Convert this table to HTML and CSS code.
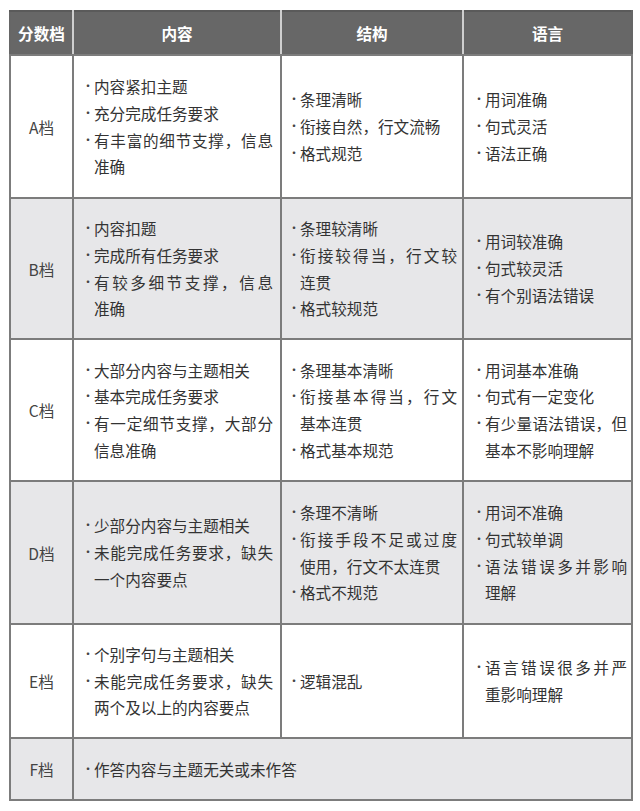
FILE: index.html
```html
<!DOCTYPE html>
<html lang="zh">
<head>
<meta charset="utf-8">
<title>评分标准</title>
<link rel="stylesheet" href="styles.css">
</head>
<body>
<table class="rubric">
  <colgroup>
    <col class="w-level">
    <col class="w-content">
    <col class="w-struct">
    <col class="w-lang">
  </colgroup>
  <thead>
    <tr>
      <th>分数档</th>
      <th>内容</th>
      <th>结构</th>
      <th>语言</th>
    </tr>
  </thead>
  <tbody>
    <tr class="r-a">
      <td class="level">A档</td>
      <td class="c-content"><ul class="pts">
        <li>内容紧扣主题</li>
        <li>充分完成任务要求</li>
        <li><span class="jl">有丰富的细节支撑，信息</span><span>准确</span></li>
      </ul></td>
      <td class="c-struct"><ul class="pts">
        <li>条理清晰</li>
        <li>衔接自然，行文流畅</li>
        <li>格式规范</li>
      </ul></td>
      <td class="c-lang"><ul class="pts">
        <li>用词准确</li>
        <li>句式灵活</li>
        <li>语法正确</li>
      </ul></td>
    </tr>
    <tr class="r-b">
      <td class="level">B档</td>
      <td class="c-content"><ul class="pts">
        <li>内容扣题</li>
        <li>完成所有任务要求</li>
        <li><span class="jl">有较多细节支撑，信息</span><span>准确</span></li>
      </ul></td>
      <td class="c-struct"><ul class="pts">
        <li>条理较清晰</li>
        <li><span class="jl">衔接较得当，行文较</span><span>连贯</span></li>
        <li>格式较规范</li>
      </ul></td>
      <td class="c-lang"><ul class="pts">
        <li>用词较准确</li>
        <li>句式较灵活</li>
        <li>有个别语法错误</li>
      </ul></td>
    </tr>
    <tr class="r-c">
      <td class="level">C档</td>
      <td class="c-content"><ul class="pts">
        <li>大部分内容与主题相关</li>
        <li>基本完成任务要求</li>
        <li><span class="jl">有一定细节支撑，大部分</span><span>信息准确</span></li>
      </ul></td>
      <td class="c-struct"><ul class="pts">
        <li>条理基本清晰</li>
        <li><span class="jl">衔接基本得当，行文</span><span>基本连贯</span></li>
        <li>格式基本规范</li>
      </ul></td>
      <td class="c-lang"><ul class="pts">
        <li>用词基本准确</li>
        <li>句式有一定变化</li>
        <li><span class="jl">有少量语法错误，但</span><span>基本不影响理解</span></li>
      </ul></td>
    </tr>
    <tr class="r-d">
      <td class="level">D档</td>
      <td class="c-content"><ul class="pts">
        <li>少部分内容与主题相关</li>
        <li><span class="jl">未能完成任务要求，缺失</span><span>一个内容要点</span></li>
      </ul></td>
      <td class="c-struct"><ul class="pts">
        <li>条理不清晰</li>
        <li><span class="jl">衔接手段不足或过度</span><span>使用，行文不太连贯</span></li>
        <li>格式不规范</li>
      </ul></td>
      <td class="c-lang"><ul class="pts">
        <li>用词不准确</li>
        <li>句式较单调</li>
        <li><span class="jl">语法错误多并影响</span><span>理解</span></li>
      </ul></td>
    </tr>
    <tr class="r-e">
      <td class="level">E档</td>
      <td class="c-content"><ul class="pts">
        <li>个别字句与主题相关</li>
        <li><span class="jl">未能完成任务要求，缺失</span><span>两个及以上的内容要点</span></li>
      </ul></td>
      <td class="c-struct"><ul class="pts">
        <li>逻辑混乱</li>
      </ul></td>
      <td class="c-lang"><ul class="pts">
        <li><span class="jl">语言错误很多并严</span><span>重影响理解</span></li>
      </ul></td>
    </tr>
    <tr class="r-f">
      <td class="level">F档</td>
      <td class="c-content" colspan="3"><ul class="pts">
        <li>作答内容与主题无关或未作答</li>
      </ul></td>
    </tr>
  </tbody>
</table>
</body>
</html>
```

FILE: styles.css
```css
html, body {
  margin: 0;
  background: #ffffff;
}

body {
  padding: 10px 0 0 9px;
  font-family: "Noto Sans CJK SC", "Noto Sans", sans-serif;
}

.rubric {
  border-collapse: collapse;
  table-layout: fixed;
  width: 622px;
  font-size: 15.6px;
  color: #333333;
}

.w-level { width: 63px; }
.w-content { width: 208px; }
.w-struct { width: 182px; }
.w-lang { width: 169px; }

.rubric th,
.rubric td {
  border: 2px solid #7c7c7c;
  padding: 0;
  vertical-align: middle;
}

.rubric thead th {
  height: 42px;
  background: #676767;
  color: #ffffff;
  font-weight: 700;
  font-size: 15.6px;
  text-align: center;
  border-top-color: #5a5a5a;
  border-left-color: #cfcfcf;
  border-right-color: #cfcfcf;
}

.rubric thead th:first-child { border-left-color: #666; }
.rubric thead th:last-child { border-right-color: #666; }

.rubric tbody tr:nth-child(even) td {
  background: #e7e7e9;
}

.r-a td { height: 141px; }
.r-b td { height: 139px; }
.r-c td { height: 140px; }
.r-d td { height: 141px; }
.r-e td { height: 112px; }
.r-f td { height: 60px; }

.rubric .level {
  text-align: center;
  color: #444;
}

.rubric .c-content { padding: 0 7px 0 8px; }
.rubric .c-struct { padding: 0 5px 0 6px; }
.rubric .c-lang { padding: 0 4px 0 9px; }

.pts {
  list-style: none;
  margin: 0;
  padding: 0;
}

.pts li {
  display: grid;
  grid-template-columns: 12px 1fr;
  line-height: 26.7px;
}

.pts li::before {
  content: "•";
  grid-row: 1;
  grid-column: 1;
  font-size: 12px;
  line-height: 26.7px;
  color: #444;
}

.pts li > span {
  grid-column: 2;
}

.jl {
  text-align: justify;
  text-align-last: justify;
}
```
